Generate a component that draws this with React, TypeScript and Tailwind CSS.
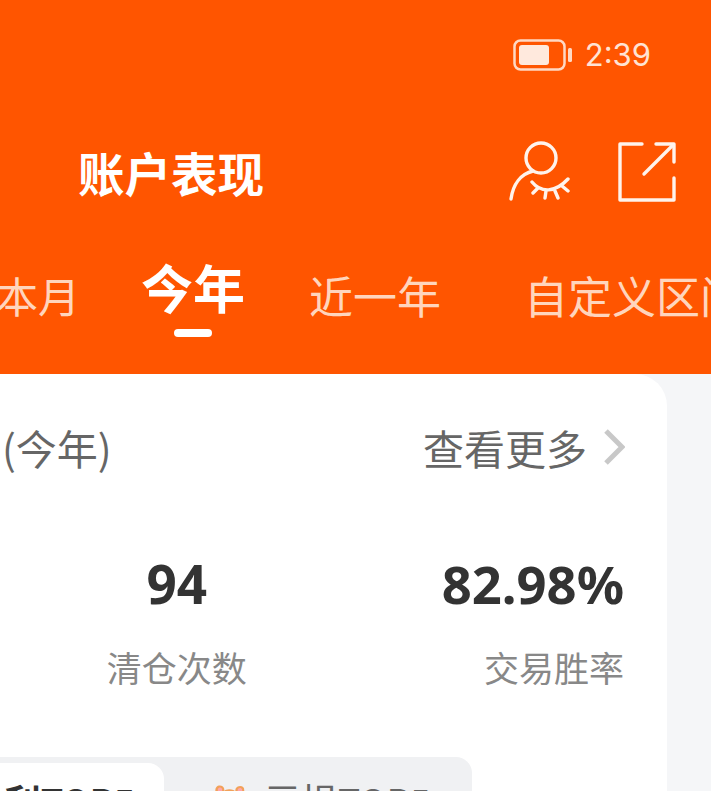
const cjk = "font-['Noto_Sans_CJK_SC','Noto_Sans',sans-serif]";

function BatteryIcon() {
  return (
    <svg width="60" height="32" viewBox="0 0 60 32" fill="none">
      <rect x="1.5" y="1.5" width="50" height="29" rx="6" stroke="#ffd9c4" strokeWidth="2.5" />
      <rect x="6" y="6" width="30" height="20" rx="3" fill="#ffe9dd" />
      <rect x="55" y="9" width="4" height="14" rx="1.5" fill="#ffd9c4" />
    </svg>
  );
}

function HideIcon() {
  return (
    <svg width="62" height="62" viewBox="0 0 62 62" fill="none" stroke="#fff3ec" strokeWidth="3.4" strokeLinecap="round">
      <circle cx="33" cy="17" r="15" />
      <path d="M25 30C13 33 5 43 3 58" />
      <path d="M24 41C33 52 47 52 60 38" />
      <path d="M30 47L25 52M38 50L37 57M47 50L50 57M54 45L60 50" />
    </svg>
  );
}

function ShareIcon() {
  return (
    <svg width="58" height="60" viewBox="0 0 58 60" fill="none" stroke="#fff3ec" strokeWidth="3.4" strokeLinecap="round" strokeLinejoin="round">
      <path d="M24 2H2V58H56V36" />
      <path d="M26 32L55 3" />
      <path d="M38 2H56V20" />
    </svg>
  );
}

function Chevron() {
  return (
    <svg width="22" height="36" viewBox="0 0 22 36" fill="none" stroke="#c8c8c8" strokeWidth="5">
      <path d="M3 2L19 18L3 34" />
    </svg>
  );
}

export default function App() {
  return (
    <div className={`${cjk} relative h-[791px] w-[711px] overflow-hidden bg-[#f5f6f8]`}>
      <div className="h-[374px] bg-[#ff5500] text-white">
        <div className="flex items-center justify-end pr-[60px] pt-[38px]">
          <BatteryIcon />
          <span className="ml-[12px] font-['Inter',sans-serif] text-[31px] leading-[34px] text-[#ffe3d3]">2:39</span>
        </div>
        <div className="mt-[68px] flex items-center pl-[78px] pr-[35px]">
          <div className="text-[46.5px] font-bold leading-[64px]">账户表现</div>
          <div className="ml-auto flex items-center gap-[48px]">
            <HideIcon />
            <ShareIcon />
          </div>
        </div>
        <div className="-ml-[4px] mt-[52px] flex items-start whitespace-nowrap">
          <span className="mt-[12px] text-[42px] leading-[54px] text-[#ffd5bd]">本月</span>
          <div className="ml-[61px] flex flex-col items-center">
            <span className="text-[52px] font-bold leading-[62px]">今年</span>
            <span className="mt-[11px] h-[8px] w-[38px] rounded-full bg-white" />
          </div>
          <span className="ml-[64px] mt-[12px] text-[44px] leading-[54px] text-[#ffd5bd]">近一年</span>
          <span className="ml-[83px] mt-[12px] text-[44px] leading-[54px] text-[#ffd5bd]">自定义区间</span>
        </div>
      </div>

      <div className="h-[417px] w-[667px] rounded-tr-[32px] bg-white">
        <div className="flex items-center justify-between pl-[2px] pr-[42px] pt-[47px]">
          <span className="text-[41px] leading-[52px] text-[#666]">(今年)</span>
          <span className="flex items-center text-[41px] leading-[52px] text-[#666]">
            查看更多
            <span className="ml-[16px]">
              <Chevron />
            </span>
          </span>
        </div>
        <div className="mt-[81px] flex justify-end pr-[43px]">
          <div className="flex flex-col items-center">
            <div className="font-['Noto_Sans',sans-serif] text-[53px] font-bold leading-[60px] text-[#333]">94</div>
            <div className="mt-[33px] text-[35px] leading-[40px] text-[#888]">清仓次数</div>
          </div>
          <div className="ml-[195px] flex flex-col items-end">
            <div className="font-['Noto_Sans',sans-serif] text-[52.5px] font-bold leading-[60px] text-[#333]">82.98%</div>
            <div className="mt-[33px] text-[35px] leading-[40px] text-[#888]">交易胜率</div>
          </div>
        </div>
        <div className="-ml-[20px] mt-[70px] flex h-[80px] w-[492px] items-start rounded-[16px] bg-[#f0f1f3] pt-[6px]">
          <div className="flex h-[74px] w-[184px] justify-end whitespace-nowrap rounded-[16px] bg-white pr-[29px] pt-[12px] text-[36px] font-bold leading-[50px] text-[#333]">
            盈利TOP5
          </div>
          <div className="flex items-center pl-[47px] pt-[12px] text-[37px] leading-[50px] text-[#666]">
            <span className="-mt-[8px] mr-[16px] text-[30px]">🐹</span>
            亏损TOP5
          </div>
        </div>
      </div>
    </div>
  );
}
